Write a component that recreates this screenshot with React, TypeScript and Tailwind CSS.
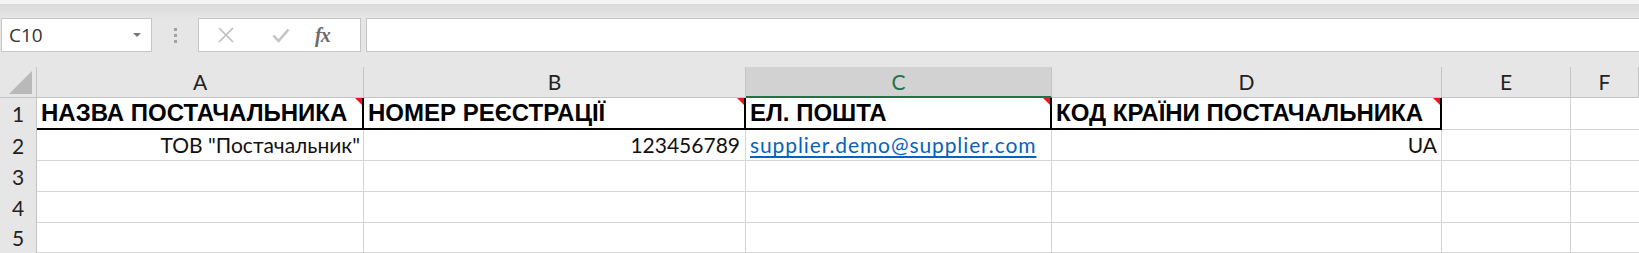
import React from "react";

const cols = [
  { key: "A", w: "w-[327px]" },
  { key: "B", w: "w-[382px]" },
  { key: "C", w: "w-[306px]" },
  { key: "D", w: "w-[390px]" },
  { key: "E", w: "w-[129px]" },
  { key: "F", w: "flex-1" },
];

const headers = [
  "НАЗВА ПОСТАЧАЛЬНИКА",
  "НОМЕР РЕЄСТРАЦІЇ",
  "ЕЛ. ПОШТА",
  "КОД КРАЇНИ ПОСТАЧАЛЬНИКА",
];

const cellFont = "font-['Lato','Open_Sans',sans-serif] text-[21px] text-[#111]";

function RedMark() {
  return (
    <span className="absolute top-0 right-0 w-0 h-0 border-t-[7px] border-l-[7px] border-t-[#e8191b] border-l-transparent" />
  );
}

function RowHead({ n, h }: { n: number; h: string }) {
  return (
    <div
      className={`w-[37px] ${h} shrink-0 bg-[#e6e6e6] border-r border-[#c4c4c4] flex items-center justify-center ${cellFont} text-[#222]`}
    >
      {n}
    </div>
  );
}

export default function App() {
  return (
    <div className="w-[1639px] h-[253px] overflow-hidden bg-[#e6e6e6] flex flex-col select-none">
      {/* top shadow strip */}
      <div className="h-[4px] bg-[#f3f3f3]" />
      <div className="h-[14px] bg-linear-to-b from-[#d9d9d9] to-[#e6e6e6]" />

      {/* formula bar */}
      <div className="h-[34px] flex items-stretch">
        <div className="ml-[1px] w-[151px] bg-white border border-[#c6c6c6] flex items-center justify-between pl-[7px] pr-[10px]">
          <span className="font-['Open_Sans',sans-serif] text-[19px] text-[#333]">C10</span>
          <span className="w-0 h-0 border-t-[4px] border-x-[4px] border-t-[#777] border-x-transparent" />
        </div>
        <div className="w-[46px] flex flex-col items-center justify-center gap-[3px]">
          <span className="w-[3px] h-[3px] bg-[#a3a3a3]" />
          <span className="w-[3px] h-[3px] bg-[#a3a3a3]" />
          <span className="w-[3px] h-[3px] bg-[#a3a3a3]" />
        </div>
        <div className="w-[163px] bg-white border border-[#c6c6c6] flex items-center">
          <svg className="ml-[18px]" width="18" height="18" viewBox="0 0 18 18">
            <path d="M2 2L16 16M16 2L2 16" stroke="#bdbdbd" strokeWidth="1.6" fill="none" />
          </svg>
          <svg className="ml-[37px]" width="18" height="16" viewBox="0 0 18 16">
            <path d="M1.5 8.5L6.5 14L16.5 2.5" stroke="#c4c4c4" strokeWidth="2.6" fill="none" />
          </svg>
          <span className="ml-[25px] font-['Liberation_Serif',serif] italic font-bold text-[20px] text-[#6b6b6b] tracking-[-1px]">
            fx
          </span>
        </div>
        <div className="ml-[5px] flex-1 bg-white border-y border-l border-[#c6c6c6]" />
      </div>

      <div className="h-[15px]" />

      {/* column headers */}
      <div className="h-[31px] flex border-b border-[#c4c4c4]">
        <div className="w-[37px] shrink-0 border-r border-[#c4c4c4] relative">
          <span className="absolute right-[4px] bottom-[3px] w-0 h-0 border-b-[23px] border-l-[23px] border-b-[#b9b9b9] border-l-transparent" />
        </div>
        {cols.map((c) =>
          c.key === "C" ? (
            <div
              key={c.key}
              className={`${c.w} shrink-0 bg-[#d2d2d2] border-b-2 border-[#217346] border-r border-r-[#c4c4c4] flex items-center justify-center ${cellFont} text-[#217346] -mb-[1px]`}
            >
              {c.key}
            </div>
          ) : (
            <div
              key={c.key}
              className={`${c.w} shrink-0 border-r border-[#c4c4c4] flex items-center justify-center ${cellFont} text-[#222]`}
            >
              {c.key}
            </div>
          )
        )}
      </div>

      {/* row 1 */}
      <div className="h-[32px] flex">
        <RowHead n={1} h="h-[32px]" />
        {headers.map((t, i) => (
          <div
            key={t}
            className={`${cols[i].w} shrink-0 relative bg-white border-b-2 border-r-2 border-black flex items-center pl-[4px] font-['Liberation_Sans','Arial',sans-serif] font-bold text-[24px] leading-none text-black whitespace-nowrap`}
          >
            {t}
            <RedMark />
          </div>
        ))}
        <div className="w-[129px] shrink-0 bg-white border-r border-b border-[#d4d4d4]" />
        <div className="flex-1 bg-white border-b border-[#d4d4d4]" />
      </div>

      {/* row 2 */}
      <div className="h-[31px] flex">
        <RowHead n={2} h="h-[31px]" />
        <div className={`w-[327px] shrink-0 bg-white border-r border-b border-[#d4d4d4] flex items-center justify-end pr-[3px] ${cellFont}`}>
          ТОВ "Постачальник"
        </div>
        <div className={`w-[382px] shrink-0 bg-white border-r border-b border-[#d4d4d4] flex items-center justify-end pr-[5px] ${cellFont} text-[20px]`}>
          123456789
        </div>
        <div className={`w-[306px] shrink-0 bg-white border-r border-b border-[#d4d4d4] flex items-center pl-[4px] ${cellFont}`}>
          <a href="#" className="text-[#0563c1] underline underline-offset-[3px] tracking-[0.9px]">
            supplier.demo@supplier.com
          </a>
        </div>
        <div className={`w-[390px] shrink-0 bg-white border-r border-b border-[#d4d4d4] flex items-center justify-end pr-[4px] ${cellFont}`}>
          UA
        </div>
        <div className="w-[129px] shrink-0 bg-white border-r border-b border-[#d4d4d4]" />
        <div className="flex-1 bg-white border-b border-[#d4d4d4]" />
      </div>

      {/* empty rows */}
      {[3, 4, 5].map((n) => (
        <div key={n} className={`${n === 5 ? "h-[30px]" : "h-[31px]"} flex`}>
          <RowHead n={n} h={n === 5 ? "h-[30px]" : "h-[31px]"} />
          {cols.map((c) => (
            <div
              key={c.key}
              className={`${c.w} shrink-0 bg-white border-b border-[#d4d4d4] ${c.key === "F" ? "" : "border-r"}`}
            />
          ))}
        </div>
      ))}
    </div>
  );
}
